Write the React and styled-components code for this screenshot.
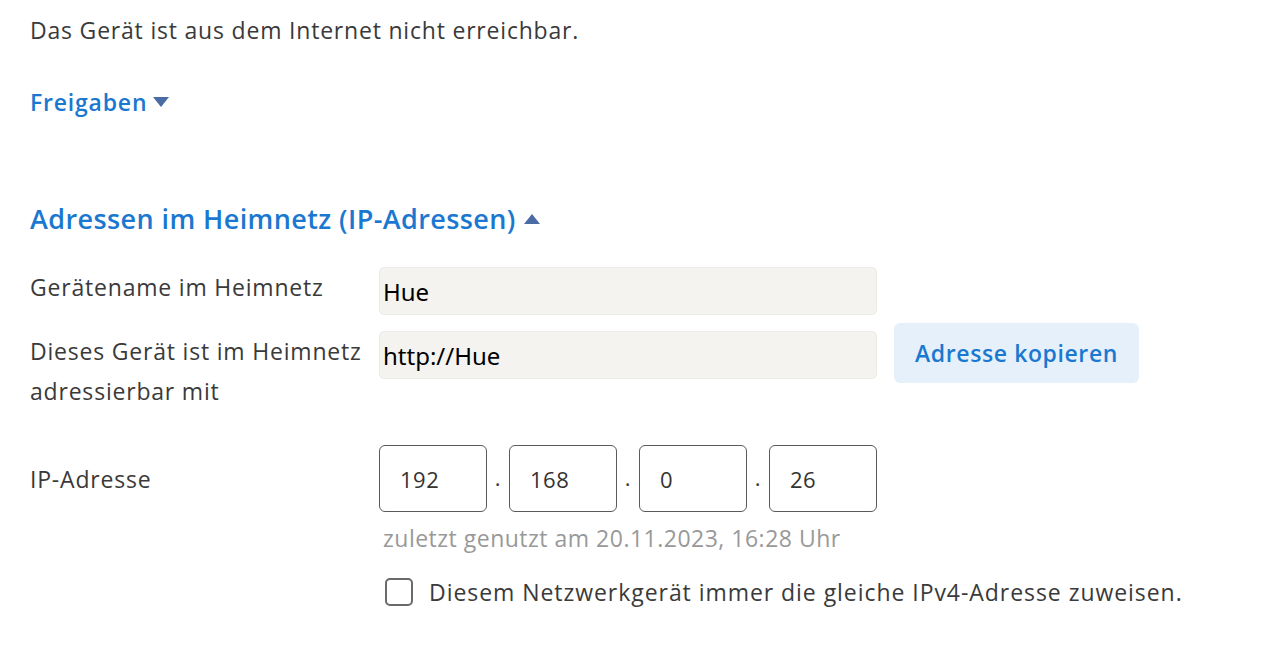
import styled, { createGlobalStyle } from 'styled-components'

const GlobalStyle = createGlobalStyle`
    body {
        margin: 0;
        background: #fff;
        font-family: "Open Sans", "Noto Sans", sans-serif;
        color: #3a3a3a;
        letter-spacing: 0.8px;
    }
`

const Seite = styled.main`
    padding: 10px 30px 0;
    width: 1276px;
    box-sizing: border-box;
`

const Hinweis = styled.p`
    margin: 0;
    font-size: 23px;
    line-height: 40px;
`

const Aufklapper = styled.h2`
    margin: ${props => props.$abstand};
    display: flex;
    align-items: center;
    gap: ${props => props.$gross ? '8px' : '6px'};
    color: #1b78d0;
    font-weight: 600;
    font-size: ${props => props.$gross ? '27px' : '23px'};
    letter-spacing: ${props => props.$gross ? '0.4px' : '0.8px'};
    line-height: 40px;
`

const Dreieck = styled.span`
    width: 0;
    height: 0;
    border-left: 8px solid transparent;
    border-right: 8px solid transparent;
    ${props => props.$offen
        ? 'border-bottom: 10px solid #4a6ba3;'
        : 'border-top: 10px solid #4a6ba3;'}
`

const Formular = styled.div`
    display: grid;
    grid-template-columns: 349px 1fr;
    row-gap: 16px;
    margin-top: 28px;
`

const Bezeichnung = styled.div`
    font-size: 23px;
    line-height: 40px;
    padding-top: ${props => props.$oben || '0'};
    padding-right: 10px;
`

const Zeile = styled.div`
    display: flex;
    align-items: ${props => props.$oben ? 'flex-start' : 'center'};
    gap: ${props => props.$abstand || '17px'};
`

const Feld = styled.div`
    width: 498px;
    height: 48px;
    box-sizing: border-box;
    border-radius: 5px;
    background: #f4f3f0;
    border: 1px solid #ecebe7;
    padding: 0 3px;
    display: flex;
    align-items: center;
    font-family: "Noto Sans", "DejaVu Sans", sans-serif;
    font-size: 24px;
    letter-spacing: 0;
    color: #000;
`

const Knopf = styled.button`
    width: 245px;
    height: 60px;
    margin-top: -8px;
    border: none;
    border-radius: 6px;
    background: #e6f0fa;
    color: #1b78d0;
    font-family: "Open Sans", "Noto Sans", sans-serif;
    font-weight: 600;
    font-size: 23px;
    letter-spacing: 0.6px;
`

const IpGruppe = styled.div`
    display: flex;
    align-items: flex-end;
    margin-top: 18px;
`

const IpTeil = styled.div`
    width: 108px;
    height: 67px;
    box-sizing: border-box;
    border: 1px solid #5a5a5a;
    border-radius: 6px;
    display: flex;
    align-items: center;
    padding-left: 20px;
    font-size: 22px;
    letter-spacing: 0.5px;
    color: #333;
`

const Punkt = styled.span`
    width: 22px;
    text-align: center;
    font-size: 22px;
    line-height: 40px;
    padding-bottom: 4px;
`

const Zuletzt = styled.div`
    grid-column: 2;
    margin-top: -10px;
    padding-left: 4px;
    color: #999;
    font-size: 23px;
    letter-spacing: 0.5px;
    line-height: 40px;
`

const Auswahl = styled.label`
    grid-column: 2;
    display: flex;
    align-items: center;
    gap: 16px;
    margin-top: -2px;
    padding-left: 6px;
    font-size: 23px;
    letter-spacing: 0.95px;
    line-height: 40px;
`

const Kaestchen = styled.span`
    width: 28px;
    height: 28px;
    box-sizing: border-box;
    border: 2px solid #6a6a6a;
    border-radius: 5px;
    background: #fff;
`

function App() {
    const ip = ['192', '168', '0', '26']

    return (
        <>
            <GlobalStyle />
            <Seite>
                <Hinweis>Das Gerät ist aus dem Internet nicht erreichbar.</Hinweis>
                <Aufklapper $abstand="32px 0 0">
                    Freigaben <Dreieck />
                </Aufklapper>
                <Aufklapper $gross $offen $abstand="77px 0 0">
                    Adressen im Heimnetz (IP-Adressen) <Dreieck $offen />
                </Aufklapper>
                <Formular>
                    <Bezeichnung>Gerätename im Heimnetz</Bezeichnung>
                    <Zeile>
                        <Feld>Hue</Feld>
                    </Zeile>

                    <Bezeichnung>
                        Dieses Gerät ist im Heimnetz<br />adressierbar mit
                    </Bezeichnung>
                    <Zeile $oben>
                        <Feld>http://Hue</Feld>
                        <Knopf>Adresse kopieren</Knopf>
                    </Zeile>

                    <Bezeichnung $oben="32px">IP-Adresse</Bezeichnung>
                    <IpGruppe>
                        {ip.map((teil, i) => (
                            <Zeile key={i} $abstand="0">
                                {i > 0 && <Punkt>.</Punkt>}
                                <IpTeil>{teil}</IpTeil>
                            </Zeile>
                        ))}
                    </IpGruppe>

                    <Zuletzt>zuletzt genutzt am 20.11.2023, 16:28 Uhr</Zuletzt>
                    <Auswahl>
                        <Kaestchen />
                        Diesem Netzwerkgerät immer die gleiche IPv4-Adresse zuweisen.
                    </Auswahl>
                </Formular>
            </Seite>
        </>
    )
}

export default App
